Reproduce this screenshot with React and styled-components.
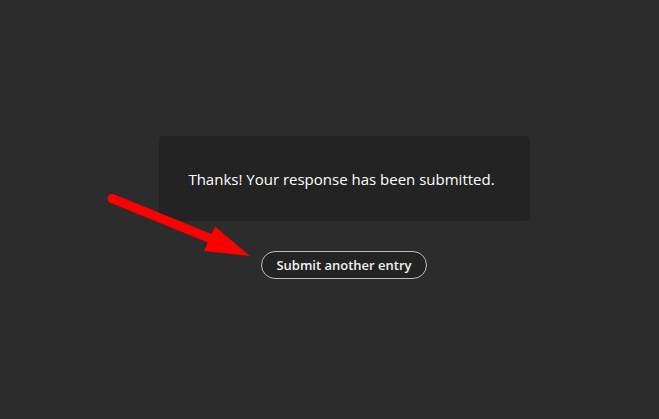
import React from "react";
import styled, { createGlobalStyle } from "styled-components";

const Global = createGlobalStyle`
  html, body { margin: 0; padding: 0; background: #2c2c2c; }
  body { font-family: "Open Sans", "Noto Sans", sans-serif; }
`;

const Page = styled.div`
  position: relative;
  width: 659px;
  height: 419px;
  box-sizing: border-box;
  padding: 136px 0 0 29px;
  display: flex;
  flex-direction: column;
  align-items: center;
  gap: 30px;
  background: #2c2c2c;
  overflow: hidden;
`;

const Card = styled.div`
  width: 371px;
  height: 85px;
  box-sizing: border-box;
  background: #232323;
  border-radius: 5px;
  display: flex;
  align-items: center;
  justify-content: center;
  color: #ffffff;
  font-size: 15px;
  padding: 1px 5px 0 0;
`;

const Button = styled.button`
  width: 166px;
  height: 28px;
  box-sizing: border-box;
  border: 1px solid #bdbdbd;
  border-radius: 14px;
  background: #232323;
  color: #f2f2f2;
  font-family: "Open Sans", "Noto Sans", sans-serif;
  font-weight: 600;
  font-size: 13px;
  display: flex;
  align-items: center;
  justify-content: center;
  padding: 0;
  cursor: pointer;
`;

const ArrowLayer = styled.svg`
  position: absolute;
  left: 0;
  top: 0;
  pointer-events: none;
`;

export default function App() {
  return (
    <>
      <Global />
      <Page>
        <Card>Thanks! Your response has been submitted.</Card>
        <Button>Submit another entry</Button>
        <ArrowLayer width="659" height="419" viewBox="0 0 659 419">
          <line x1="112" y1="198.5" x2="214" y2="240" stroke="#ff0000" strokeWidth="9" strokeLinecap="round" />
          <polygon points="215,226.5 204,251 250,256" fill="#ff0000" />
        </ArrowLayer>
      </Page>
    </>
  );
}
